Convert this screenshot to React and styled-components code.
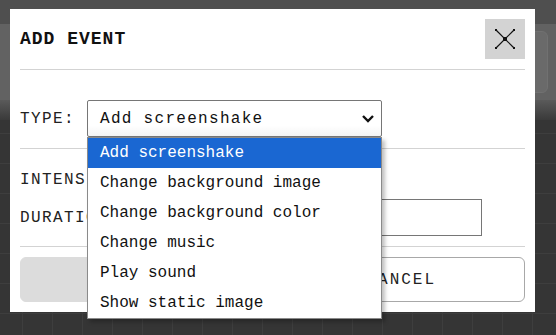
import React from 'react';
import styled, { createGlobalStyle } from 'styled-components';

const GlobalStyle = createGlobalStyle`
    body {
        margin: 0;
        background: #353535;
        font-family: 'Liberation Mono', 'Courier New', monospace;
    }
`;

const Screen = styled.div`
    position: relative;
    width: 556px;
    height: 335px;
    display: flex;
    flex-direction: column;
    overflow: hidden;
`;

const TopBar = styled.div`
    height: 24px;
    background: #4f4f4f;
`;

const Toolbar = styled.div`
    height: 76px;
    background: #626262;
    display: flex;
    align-items: center;
    justify-content: flex-end;
    gap: 6px;
    padding: 0 8px;
`;

const ToolButton = styled.div`
    width: 40px;
    height: 60px;
    border-radius: 6px;
    background: #6a6a6a;
    border: 1px solid #717171;
`;

const Fade = styled.div`
    height: 20px;
    background: linear-gradient(#5a5a5a, #3a3a3a);
`;

const Canvas = styled.div`
    flex: 1;
    background-color: #353535;
    background-image:
        linear-gradient(#3e3e3e 1px, transparent 1px),
        linear-gradient(90deg, #3e3e3e 1px, transparent 1px);
    background-size: 30px 30px;
    background-position: -8px -17px;
`;

const Modal = styled.div`
    position: absolute;
    left: 10px;
    top: 9px;
    width: 525px;
    box-sizing: border-box;
    padding: 10px;
    background: #fff;
    color: #111;
`;

const Header = styled.div`
    display: flex;
    justify-content: space-between;
    align-items: center;
    padding-bottom: 10px;
    border-bottom: 1px solid #d3d3d3;
`;

const Title = styled.h1`
    margin: 0;
    font-size: 18px;
    font-weight: bold;
    letter-spacing: 1px;
`;

const CloseButton = styled.button`
    width: 40px;
    height: 40px;
    padding: 0;
    border: none;
    background: #d3d3d3;
    display: flex;
    align-items: center;
    justify-content: center;
`;

const TypeRow = styled.div`
    display: flex;
    align-items: center;
    margin-top: 30px;
    padding-bottom: 11px;
    border-bottom: 1px solid #d3d3d3;
`;

const Label = styled.label`
    font-size: 16px;
    letter-spacing: 1.4px;
    color: #222;
    width: ${p => p.$width}px;
    flex-shrink: 0;
`;

const SelectWrap = styled.div`
    position: relative;
`;

const SelectBox = styled.div`
    width: 295px;
    height: 37px;
    box-sizing: border-box;
    border: 1px solid #767676;
    border-radius: 2px;
    display: flex;
    align-items: center;
    justify-content: space-between;
    padding: 0 6px 0 12px;
    font-size: 16px;
    letter-spacing: 1.3px;
    color: #111;
    background: linear-gradient(#fff 70%, #f4f4f4);
`;

const OptionList = styled.ul`
    position: absolute;
    left: 0;
    top: 100%;
    width: 295px;
    box-sizing: border-box;
    margin: 0;
    padding: 0;
    list-style: none;
    background: #fff;
    border: 1px solid #8a8a8a;
    box-shadow: 3px 3px 4px rgba(0, 0, 0, 0.25);
    z-index: 2;
`;

const Option = styled.li`
    height: 30px;
    display: flex;
    align-items: center;
    padding-left: 12px;
    font-size: 16px;
    color: ${p => (p.$active ? '#fff' : '#111')};
    background: ${p => (p.$active ? '#1a67d2' : 'transparent')};
`;

const Fields = styled.div`
    display: flex;
    flex-direction: column;
    gap: 1px;
    padding: 12px 0 10px;
    border-bottom: 1px solid #d3d3d3;
`;

const FieldRow = styled.div`
    display: flex;
    align-items: center;
    height: 37px;
`;

const TextInput = styled.input`
    width: ${p => p.$width}px;
    height: 37px;
    box-sizing: border-box;
    border: 1px solid #767676;
    font-family: inherit;
    font-size: 16px;
`;

const Buttons = styled.div`
    display: grid;
    grid-template-columns: 1fr 1fr;
    gap: 10px;
    margin-top: 10px;
`;

const Button = styled.button`
    height: 45px;
    border-radius: 6px;
    font-family: inherit;
    font-size: 16px;
    letter-spacing: 2px;
    color: #222;
    background: ${p => (p.$primary ? '#dcdcdc' : '#fff')};
    border: 1px solid ${p => (p.$primary ? '#dcdcdc' : '#a8a8a8')};
`;

const CloseIcon = () => (
    <svg width="22" height="22" viewBox="0 0 22 22">
        <line x1="2" y1="2" x2="20" y2="20" stroke="#111" strokeWidth="1.2" />
        <line x1="20" y1="2" x2="2" y2="20" stroke="#111" strokeWidth="1.2" />
        <rect x="9" y="9" width="4" height="4" fill="#111" />
        <rect x="1" y="1" width="2" height="2" fill="#111" />
        <rect x="19" y="1" width="2" height="2" fill="#111" />
        <rect x="1" y="19" width="2" height="2" fill="#111" />
        <rect x="19" y="19" width="2" height="2" fill="#111" />
    </svg>
);

const Chevron = () => (
    <svg width="14" height="10" viewBox="0 0 14 10">
        <polyline points="2,2 7,7 12,2" fill="none" stroke="#111" strokeWidth="2.4" />
    </svg>
);

const options = [
    'Add screenshake',
    'Change background image',
    'Change background color',
    'Change music',
    'Play sound',
    'Show static image',
];

export default function App() {
    return (
        <>
            <GlobalStyle />
            <Screen>
                <TopBar />
                <Toolbar>
                    <ToolButton />
                    <ToolButton />
                </Toolbar>
                <Fade />
                <Canvas />
                <Modal>
                    <Header>
                        <Title>ADD EVENT</Title>
                        <CloseButton aria-label="close">
                            <CloseIcon />
                        </CloseButton>
                    </Header>
                    <TypeRow>
                        <Label $width={67}>TYPE:</Label>
                        <SelectWrap>
                            <SelectBox>
                                Add screenshake
                                <Chevron />
                            </SelectBox>
                            <OptionList>
                                {options.map((o, i) => (
                                    <Option key={o} $active={i === 0}>{o}</Option>
                                ))}
                            </OptionList>
                        </SelectWrap>
                    </TypeRow>
                    <Fields>
                        <FieldRow>
                            <Label $width={130}>INTENSITY:</Label>
                            <TextInput $width={200} defaultValue="" />
                        </FieldRow>
                        <FieldRow>
                            <Label $width={130}>DURATION:</Label>
                            <TextInput $width={332} defaultValue="" />
                        </FieldRow>
                    </Fields>
                    <Buttons>
                        <Button $primary>SAVE</Button>
                        <Button>CANCEL</Button>
                    </Buttons>
                </Modal>
            </Screen>
        </>
    );
}
